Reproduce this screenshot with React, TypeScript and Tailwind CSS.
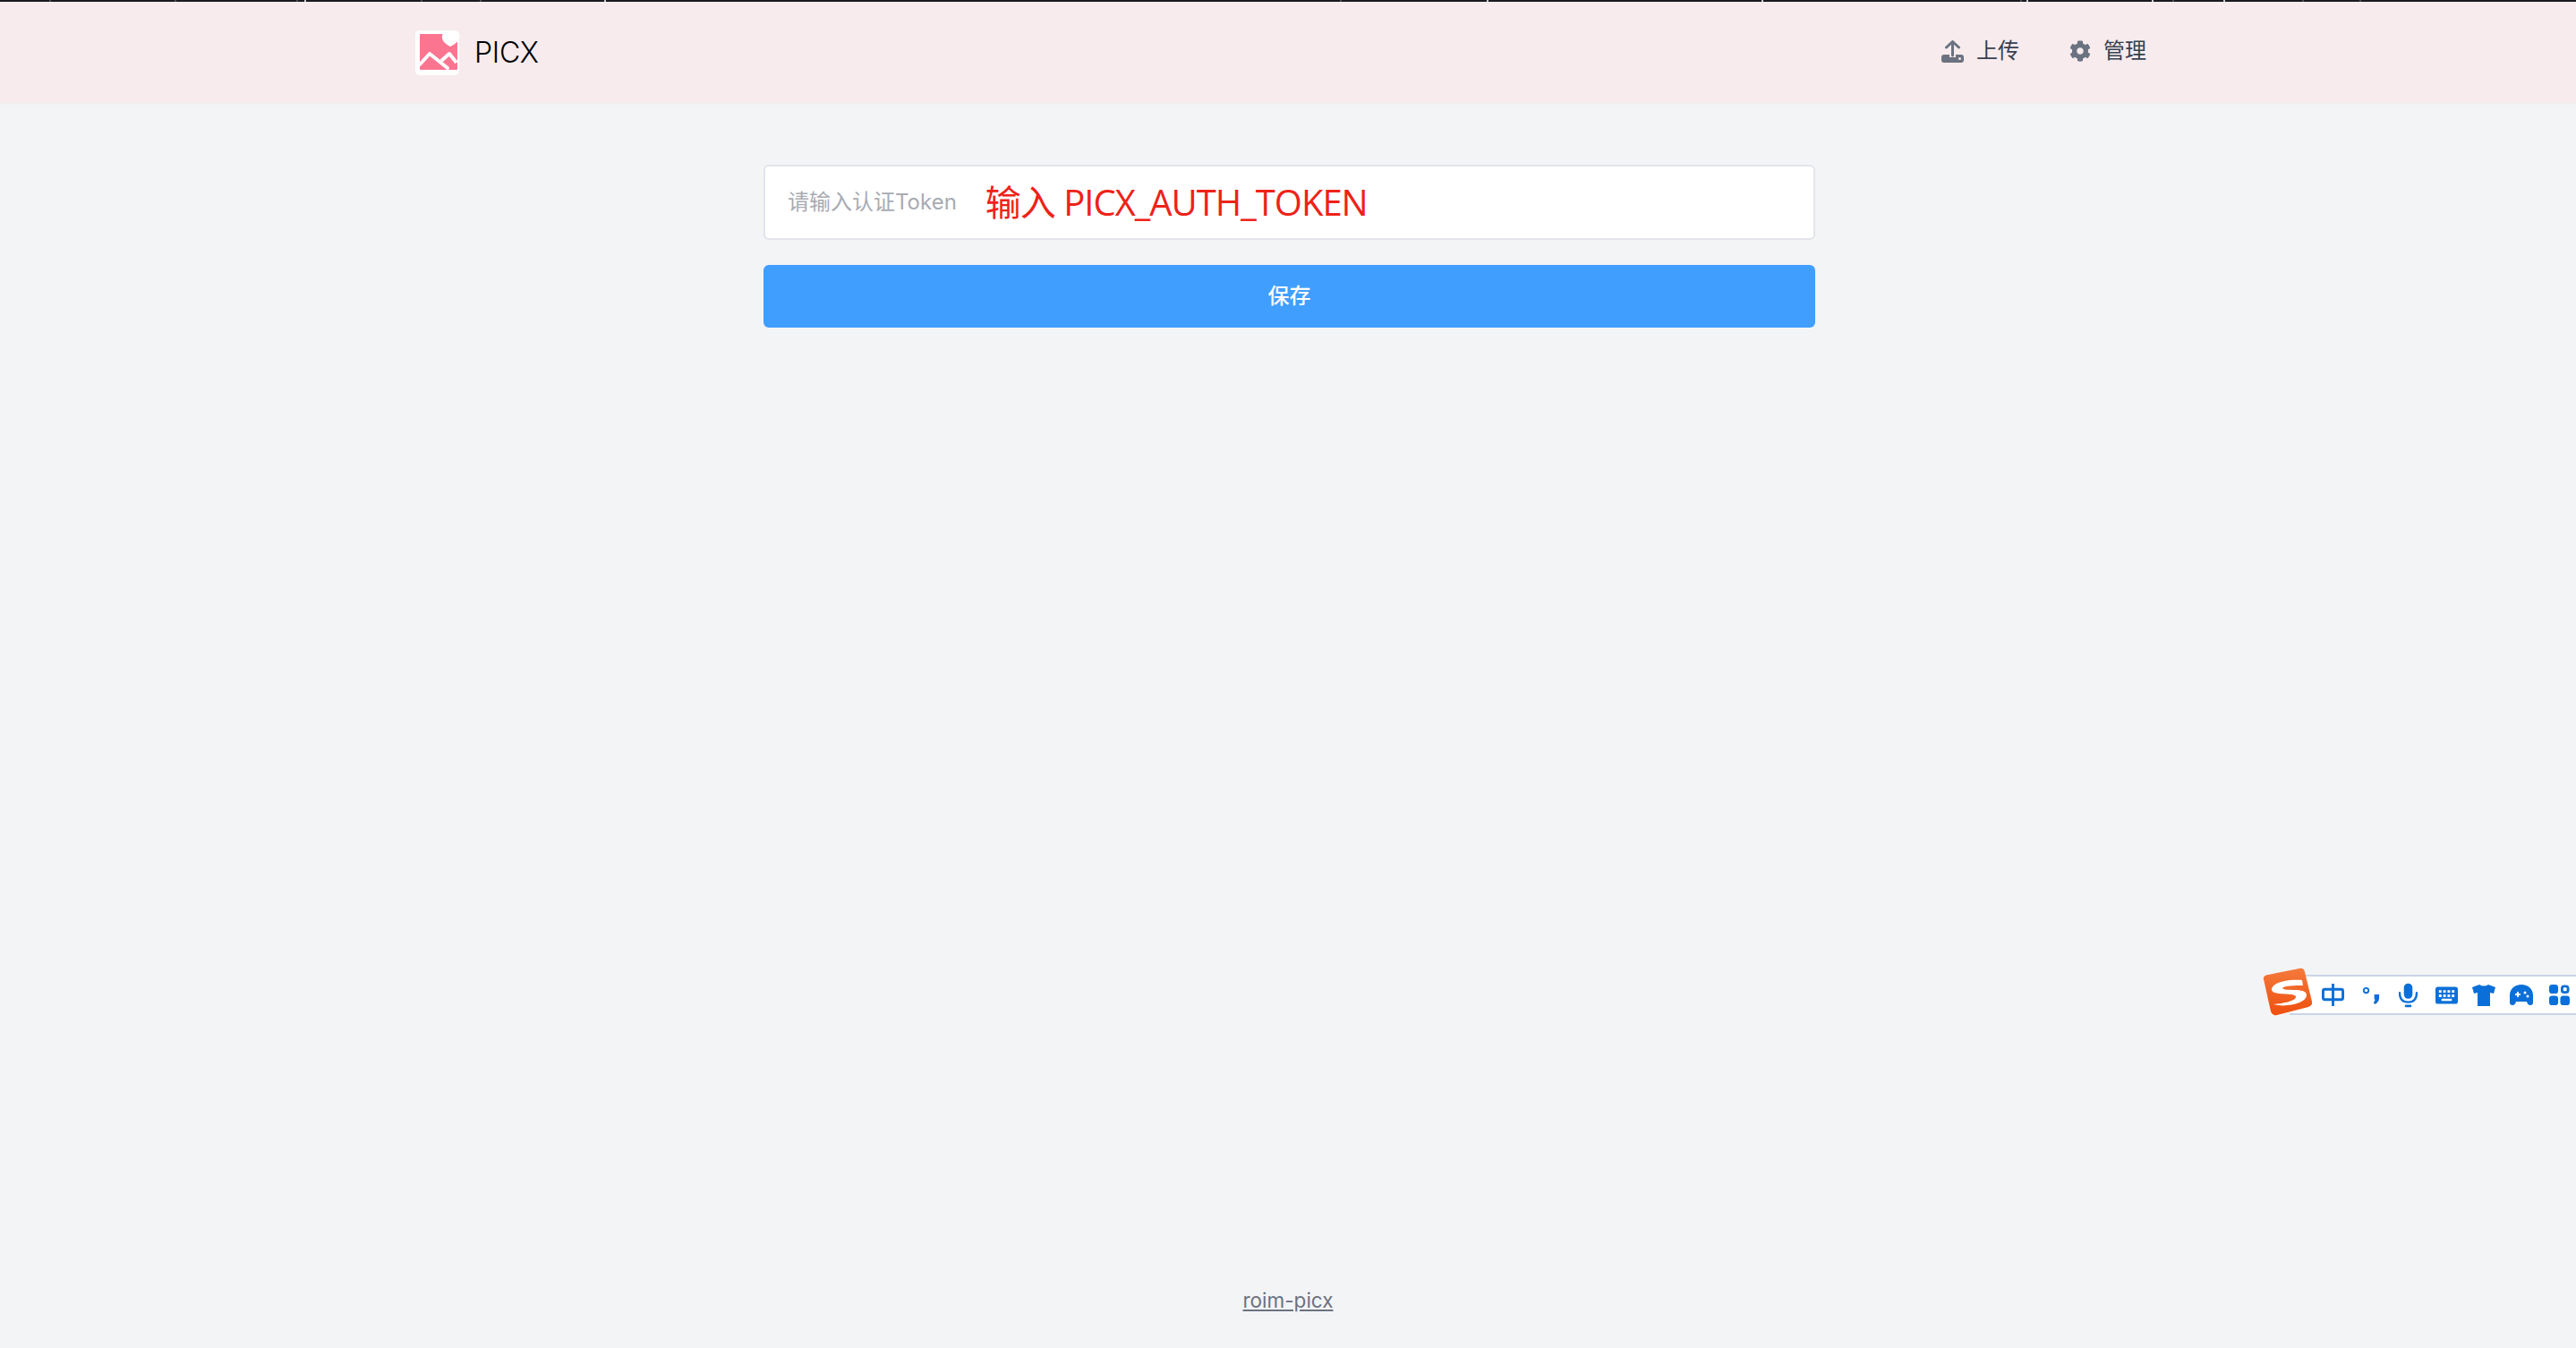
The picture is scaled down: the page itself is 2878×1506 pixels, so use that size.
import { FaCog } from 'react-icons/fa';

const sans = "font-['Inter','Noto_Sans_CJK_SC',sans-serif]";

const dimTicks = [55, 195, 331, 470, 536, 1497, 2257, 2427, 2572, 2636];
const brightTicks = [340, 675, 1661, 1968, 2264, 2404, 2484];

function Logo() {
  return (
    <svg width="50" height="50" viewBox="0 0 50 50" className="block">
      <rect x="0" y="0" width="49" height="50" rx="5" fill="#fff" />
      <rect x="5" y="4" width="42" height="40" rx="1" fill="#fb7590" />
      <path d="M5 38 L16 26 L36 42" fill="none" stroke="#fff" strokeWidth="4" strokeLinecap="round" strokeLinejoin="round" />
      <path d="M29 34 L38 26 L46 36" fill="none" stroke="#fff" strokeWidth="4" strokeLinejoin="round" />
      <path d="M39 18 C33 15 29 11 30 6 C31 1 36 -1 39.5 3 C43 -1 49 1 49.5 6 C50 11 45 15 39 18 Z" fill="#fff" />
    </svg>
  );
}

function UploadIcon() {
  return (
    <svg width="25" height="25" viewBox="0 0 25 25" className="block">
      <path d="M5.5 8 L12.5 1.5 L19.500 8" fill="none" stroke="#6b7280" strokeWidth="3" strokeLinecap="round" strokeLinejoin="round" />
      <path d="M12.5 3 V17" fill="none" stroke="#6b7280" strokeWidth="3" strokeLinecap="round" />
      <path d="M3 16 H9 V19 H16 V16 H22 Q25 16 25 19 V22 Q25 25 22 25 H3 Q0 25 0 22 V19 Q0 16 3 16 Z" fill="#6b7280" />
      <circle cx="20.500" cy="20.500" r="1.500" fill="#f7ebed" />
    </svg>
  );
}

function ImeBar() {
  return (
    <div className="absolute right-0 top-[1089px] flex h-[45px] w-[320px] items-center border-y-2 border-[#c9d5e6] bg-white pl-[36px] text-[#0a6fd8]">
      <svg width="25" height="25" viewBox="0 0 26 26" fill="none" stroke="currentColor" strokeWidth="3" className="shrink-0">
        <rect x="1.500" y="6.500" width="23" height="12" rx="2" />
        <path d="M13 0 V26" strokeLinecap="round" />
      </svg>
      <svg width="20" height="24" viewBox="0 0 22 26" fill="currentColor" className="ml-[20px] shrink-0">
        <circle cx="5" cy="7" r="3" fill="none" stroke="currentColor" strokeWidth="2" />
        <path d="M15 12 H21 V16 Q21 21 16 24 L14 22 Q16 20 16 18 H15 Z" />
      </svg>
      <svg width="21" height="28" viewBox="0 0 22 28" fill="currentColor" className="ml-[21px] shrink-0">
        <rect x="6" y="0" width="10" height="18" rx="5" />
        <path d="M1 11 Q1 22 11 22 Q21 22 21 11" fill="none" stroke="currentColor" strokeWidth="2.500" strokeLinecap="round" />
        <rect x="7" y="25" width="8" height="3" rx="1.500" />
      </svg>
      <svg width="25" height="20" viewBox="0 0 26 20" className="ml-[20px] shrink-0">
        <rect x="0" y="0" width="26" height="20" rx="3" fill="currentColor" />
        <path d="M4 4h3v3H4zM9 4h3v3H9zM14 4h3v3h-3zM19 4h3v3h-3zM4 9h3v3H4zM9 9h3v3H9zM14 9h3v3h-3zM19 9h3v3h-3zM7 14h12v2.500H7z" fill="#fff" />
      </svg>
      <svg width="26" height="24" viewBox="0 0 26 24" fill="currentColor" className="ml-[16px] shrink-0">
        <path d="M8 0 Q13 3 18 0 L26 3 L24 10 L20 9 V24 H6 V9 L2 10 L0 3 Z" />
      </svg>
      <svg width="26" height="24" viewBox="0 0 26 24" className="ml-[16px] shrink-0">
        <path d="M13 0 C21 0 26 5 26 12 V20 Q26 23 23 23 Q20 23 19 19 H7 Q6 23 3 23 Q0 23 0 20 V12 C0 5 5 0 13 0 Z" fill="currentColor" />
        <path d="M6 10h6v2H6zM8 8h2v6H8z" fill="#fff" />
        <circle cx="17" cy="9" r="1.500" fill="#fff" />
        <circle cx="20" cy="13" r="1.500" fill="#fff" />
      </svg>
      <svg width="23" height="23" viewBox="0 0 24 24" fill="currentColor" className="ml-[18px] shrink-0">
        <rect x="0" y="0" width="10.500" height="10.500" rx="3.500" />
        <rect x="15" y="2" width="7" height="7" rx="2.500" fill="none" stroke="currentColor" strokeWidth="3" />
        <rect x="0" y="13" width="10.500" height="11" rx="3.500" />
        <rect x="13" y="13" width="11" height="11" rx="3.500" />
      </svg>
    </div>
  );
}

function ImeLogo() {
  return (
    <svg width="56" height="54" viewBox="0 0 56 54" className="absolute left-[2528px] top-[1081px]">
      <defs>
        <linearGradient id="ime" x1="0" y1="0" x2="0" y2="1">
          <stop offset="0" stopColor="#f47a3c" />
          <stop offset="1" stopColor="#ef4f0e" />
        </linearGradient>
      </defs>
      <path d="M6 8 L41 1 Q46 0 47 5 L55 38 Q56 42 51 44 L16 53 Q11 54 9 49 L1 13 Q0 9 6 8 Z" fill="url(#ime)" />
      <path d="M44 14 C32 13 12 15 10 24 C9 32 32 27 37 32 C38 37 24 40 12 41 C26 45 50 40 49 30 C48 22 24 27 22 23 C24 20 36 20 45 20 Z" fill="#fff" />
    </svg>
  );
}

export default function App() {
  return (
    <div className={`relative flex h-[1506px] flex-col overflow-hidden bg-[#f3f4f6] ${sans}`}>
      <div className="relative h-[2px] shrink-0 bg-[#1a1a1f]">
        {dimTicks.map((x) => (
          <span key={x} className="absolute top-0 h-[2px] w-[2px] bg-[#4a4a58]" style={{ left: x }} />
        ))}
        {brightTicks.map((x) => (
          <span key={x} className="absolute top-0 h-[2px] w-[2px] bg-[#c8c8d8]" style={{ left: x }} />
        ))}
      </div>

      <header className="flex h-[113px] shrink-0 items-center justify-between bg-[#f7ebed] pl-[464px] pr-[480px] shadow-[0_1px_2px_rgba(0,0,0,0.04)]">
        <div className="flex items-center gap-[16px]">
          <Logo />
          <span className="text-[32px] font-light leading-none tracking-[-0.3px] text-black">PICX</span>
        </div>
        <nav className="mb-[3px] flex items-center gap-[56px] text-[24px] text-[#374151]">
          <a className="flex items-center gap-[14px]">
            <UploadIcon />
            <span>上传</span>
          </a>
          <a className="flex items-center gap-[14px]">
            <FaCog className="h-[24px] w-[24px] text-[#6b7280]" />
            <span>管理</span>
          </a>
        </nav>
      </header>

      <main className="ml-[853px] mt-[69px] flex w-[1175px] flex-1 flex-col">
        <div className="flex h-[84px] items-center rounded-[6px] border-2 border-[#e2e4ea] bg-white pl-[25px]">
          <span className="text-[24px] text-[#a8abb2]">请输入认证Token</span>
          <span className="ml-[32px] font-['Open_Sans','Noto_Sans_CJK_SC',sans-serif] text-[40px] leading-none tracking-[-1px] text-[#ee2218]">输入 PICX_AUTH_TOKEN</span>
        </div>
        <button className="mt-[28px] h-[70px] rounded-[6px] bg-[#409eff] text-[24px] font-medium text-white">保存</button>
      </main>

      <footer className="pb-[38px] text-center text-[22.5px] leading-[30px] text-[#6b7280]">
        <a className="underline">roim-picx</a>
      </footer>

      <ImeBar />
      <ImeLogo />
    </div>
  );
}
